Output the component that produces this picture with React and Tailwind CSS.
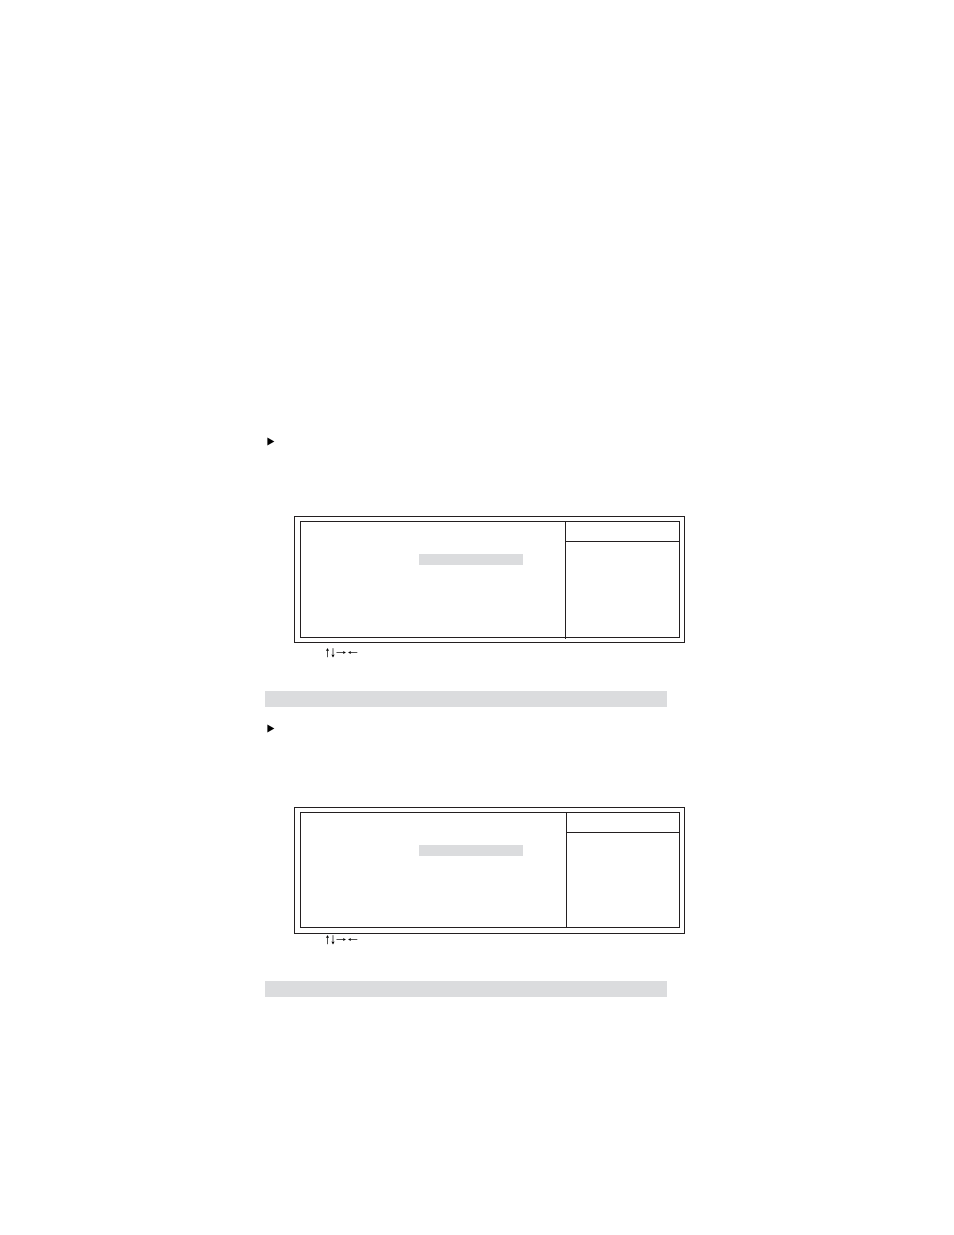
function Marker() {
  return (
    <svg className="ml-0.5 block h-[9px] w-2" viewBox="0 0 8 9" aria-hidden="true">
      <path d="M0.4 0.5 L7.4 4.5 L0.4 8.5 Z" fill="#000" />
    </svg>
  );
}

function NavigationArrows() {
  return (
    <svg
      className="ml-[60px] block h-2.5 w-[34px]"
      viewBox="0 0 34 10"
      role="img"
      aria-label="Up, down, right and left arrows"
    >
      <g stroke="#222" strokeWidth="0.8" fill="none">
        <path d="M2.5 1 V9.2" />
        <path d="M8 0.2 V8.6" />
        <path d="M11.5 4.5 H20" />
        <path d="M24 4.5 H32.3" />
      </g>
      <g fill="#000">
        <path d="M2.5 0 L4.1 3 L2.5 2.4 L0.9 3 Z" />
        <path d="M8 9.5 L6.4 6.5 L8 7.1 L9.6 6.5 Z" />
        <path d="M21 4.5 L18 6 L18.5 4.5 L18 3 Z" />
        <path d="M23 4.5 L26 3 L25.5 4.5 L26 6 Z" />
      </g>
    </svg>
  );
}

function SetupPanel({ className, innerClassName, sideClassName }) {
  return (
    <div className={`ml-[29px] flex h-[127px] border border-[#231f20] pt-1 pr-1 pl-[5px] ${className}`}>
      <div className={`flex flex-1 border border-[#231f20] ${innerClassName}`}>
        <div className="flex-1 pt-8 pl-[118px]">
          <div className="h-[11px] w-26 bg-[#dbdcde]" />
        </div>
        <div className={`border-l border-[#231f20] ${sideClassName}`}>
          <div className="h-5 border-b border-[#231f20]" />
        </div>
      </div>
    </div>
  );
}

function Bar() {
  return <div className="mr-[18px] h-4 bg-[#dbdcde]" />;
}

export default function App() {
  return (
    <main className="min-h-screen bg-white pr-[269px] pb-16 pl-[265px] font-['Liberation_Sans',sans-serif]">
      <section className="pt-[437px]">
        <Marker />
        <SetupPanel
          className="mt-[70px] pb-1"
          innerClassName=""
          sideClassName="-mb-0.5 w-[114px]"
        />
        <div className="pt-[5px] pb-[33px]">
          <NavigationArrows />
        </div>
        <Bar />
      </section>
      <section className="pt-[17px]">
        <Marker />
        <SetupPanel
          className="mt-[74px] pb-[5px]"
          innerClassName=""
          sideClassName="w-[113px]"
        />
        <div className="pt-px pb-9">
          <NavigationArrows />
        </div>
        <Bar />
      </section>
    </main>
  );
}
